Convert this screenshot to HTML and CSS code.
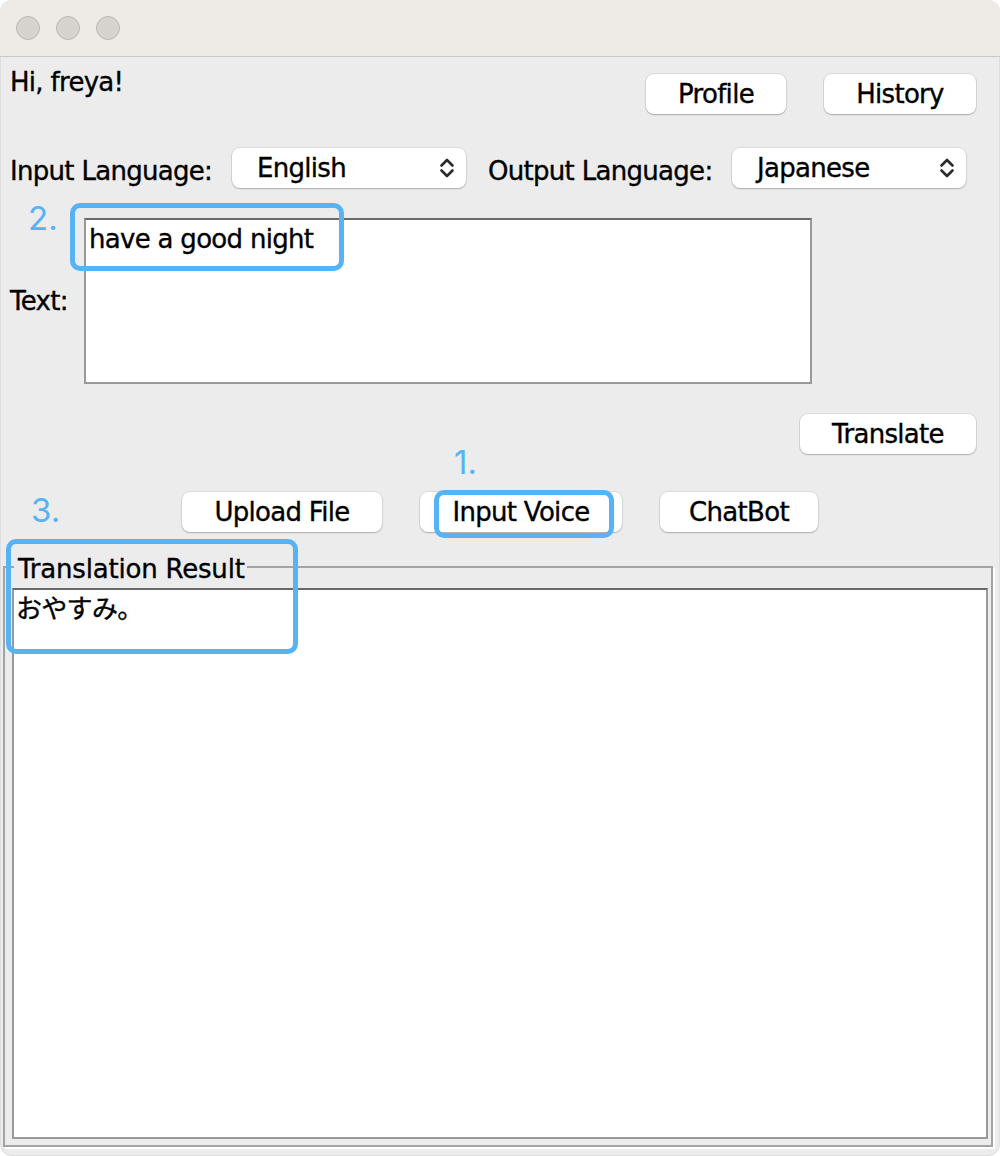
FILE: index.html
```html
<!DOCTYPE html>
<html lang="en">
<head>
<meta charset="utf-8">
<title>Translator</title>
<link rel="stylesheet" href="styles.css">
</head>
<body>
<div class="window">
  <div class="titlebar">
    <span class="light"></span><span class="light"></span><span class="light"></span>
  </div>
  <div class="content">
    <div class="top-row">
      <div class="greet">Hi, freya!</div>
      <div class="top-buttons">
        <button class="btn btn-profile">Profile</button>
        <button class="btn btn-history">History</button>
      </div>
    </div>
    <div class="lang-row">
      <label class="lang-label in-label">Input Language:</label>
      <div class="select"><span>English</span>
        <svg class="chev" width="16" height="24" viewBox="0 0 16 24"><path d="M2.5 9.5 L8 4 L13.5 9.5 M2.5 14.5 L8 20 L13.5 14.5" fill="none" stroke="#2b2b2b" stroke-width="2.6" stroke-linecap="round" stroke-linejoin="round"/></svg>
      </div>
      <label class="lang-label out-label">Output Language:</label>
      <div class="select"><span>Japanese</span>
        <svg class="chev" width="16" height="24" viewBox="0 0 16 24"><path d="M2.5 9.5 L8 4 L13.5 9.5 M2.5 14.5 L8 20 L13.5 14.5" fill="none" stroke="#2b2b2b" stroke-width="2.6" stroke-linecap="round" stroke-linejoin="round"/></svg>
      </div>
    </div>
    <div class="text-row">
      <label class="text-label">Text:</label>
      <div class="textarea">have a good night</div>
    </div>
    <div class="translate-row">
      <button class="btn btn-translate">Translate</button>
    </div>
    <div class="actions-row">
      <button class="btn btn-upload">Upload File</button>
      <button class="btn btn-voice">Input Voice</button>
      <button class="btn btn-chat">ChatBot</button>
    </div>
    <fieldset class="result">
      <legend class="result-title">Translation Result</legend>
      <div class="result-area">おやすみ。</div>
    </fieldset>
  </div>

  <div class="mark mark-box box2"></div>
  <div class="mark mark-box box1"></div>
  <div class="mark mark-box box3"></div>
  <div class="mark mark-num num2">2.</div>
  <div class="mark mark-num num1">1.</div>
  <div class="mark mark-num num3">3.</div>
</div>
</body>
</html>
```

FILE: styles.css
```css
html, body {
  margin: 0;
  padding: 0;
  background: #ffffff;
}

.window {
  position: relative;
  width: 1000px;
  height: 1156px;
  box-sizing: border-box;
  border-radius: 12px;
  overflow: hidden;
  background: #ececec;
  box-shadow: inset 0 0 0 1px rgba(0, 0, 0, 0.06);
  font-family: "DejaVu Sans", "Noto Sans CJK JP", sans-serif;
  font-size: 26px;
  letter-spacing: -0.7px;
  color: #000;
}

.titlebar {
  height: 56px;
  border-bottom: 1px solid #cbc8c5;
  background: #eeeae6;
  display: flex;
  align-items: center;
  gap: 16px;
  padding-left: 16px;
}

.light {
  width: 24px;
  height: 24px;
  box-sizing: border-box;
  border-radius: 50%;
  background: #d6d3cf;
  border: 1px solid #bcb9b5;
}

.content {
  padding-top: 10px;
  -webkit-text-stroke: 0.35px #000;
}

.btn {
  height: 40px;
  box-sizing: border-box;
  border: none;
  border-radius: 8px;
  background: #fff;
  box-shadow: 0 0 0 1px rgba(0, 0, 0, 0.07), 0 1px 1.5px rgba(0, 0, 0, 0.22);
  font: inherit;
  letter-spacing: inherit;
  color: #000;
  padding: 0;
  line-height: 30px;
}

.top-row {
  display: flex;
  justify-content: space-between;
  align-items: flex-start;
  padding: 0 24px 0 10px;
  height: 47px;
}

.greet {
  line-height: 30px;
}

.top-buttons {
  display: flex;
  gap: 38px;
  margin-top: 7px;
}

.btn-profile { width: 140px; }
.btn-history { width: 152px; }

.lang-row {
  display: flex;
  align-items: flex-start;
  margin-top: 34px;
  padding-left: 10px;
  height: 40px;
}

.lang-label {
  line-height: 30px;
  margin-top: 8px;
}

.in-label { width: 222px; }
.out-label { width: 244px; margin-left: 22px; }

.select {
  width: 234px;
  height: 40px;
  box-sizing: border-box;
  display: flex;
  align-items: center;
  justify-content: space-between;
  padding: 0 11px 0 25px;
  background: #fff;
  border-radius: 8px;
  box-shadow: 0 0 0 1px rgba(0, 0, 0, 0.07), 0 1px 1.5px rgba(0, 0, 0, 0.22);
  line-height: 30px;
}

.chev {
  display: block;
}

.text-row {
  display: flex;
  align-items: center;
  margin-top: 30px;
  padding-left: 10px;
}

.text-label {
  width: 74px;
  line-height: 30px;
}

.textarea {
  width: 728px;
  height: 166px;
  box-sizing: border-box;
  background: #fff;
  border: 2px solid #999;
  border-top-color: #6a6a6a;
  padding: 4px 3px;
  line-height: 30px;
}

.translate-row {
  display: flex;
  justify-content: flex-end;
  margin-top: 30px;
  padding-right: 24px;
}

.btn-translate { width: 176px; }

.actions-row {
  display: flex;
  justify-content: center;
  gap: 38px;
  margin-top: 38px;
}

.btn-upload { width: 200px; }
.btn-voice { width: 202px; }
.btn-chat { width: 158px; }

.result {
  margin: 18px 0 0 3px;
  width: 990px;
  box-sizing: border-box;
  border: 2px solid #a3a3a3;
  box-shadow: 2px 2px 0 #fff;
  padding: 0 3px 6px 7px;
  min-width: 0;
}

.result-title {
  padding: 4px 2px 0 4px;
  margin-left: 2px;
  line-height: 30px;
  letter-spacing: -0.2px;
}

.result-area {
  margin-top: 4px;
  height: 551px;
  box-sizing: border-box;
  background: #fff;
  border: 2px solid #999;
  border-top-color: #6a6a6a;
  padding: 4px 2px;
  line-height: 30px;
}

.mark {
  position: absolute;
}

.mark-box {
  box-sizing: border-box;
  border: 5px solid #56b3f5;
  border-radius: 10px;
}

.box2 { left: 70px; top: 203px; width: 274px; height: 68px; }
.box1 { left: 434px; top: 490px; width: 180px; height: 48px; }
.box3 { left: 6px; top: 539px; width: 292px; height: 115px; }

.mark-num {
  font-family: "Inter", "Liberation Sans", sans-serif;
  font-weight: 400;
  font-size: 33px;
  line-height: 32px;
  letter-spacing: 0;
  color: #56b3f5;
}

.num2 { left: 28px; top: 202px; }
.num1 { left: 454px; top: 446px; }
.num3 { left: 31px; top: 494px; }
```
